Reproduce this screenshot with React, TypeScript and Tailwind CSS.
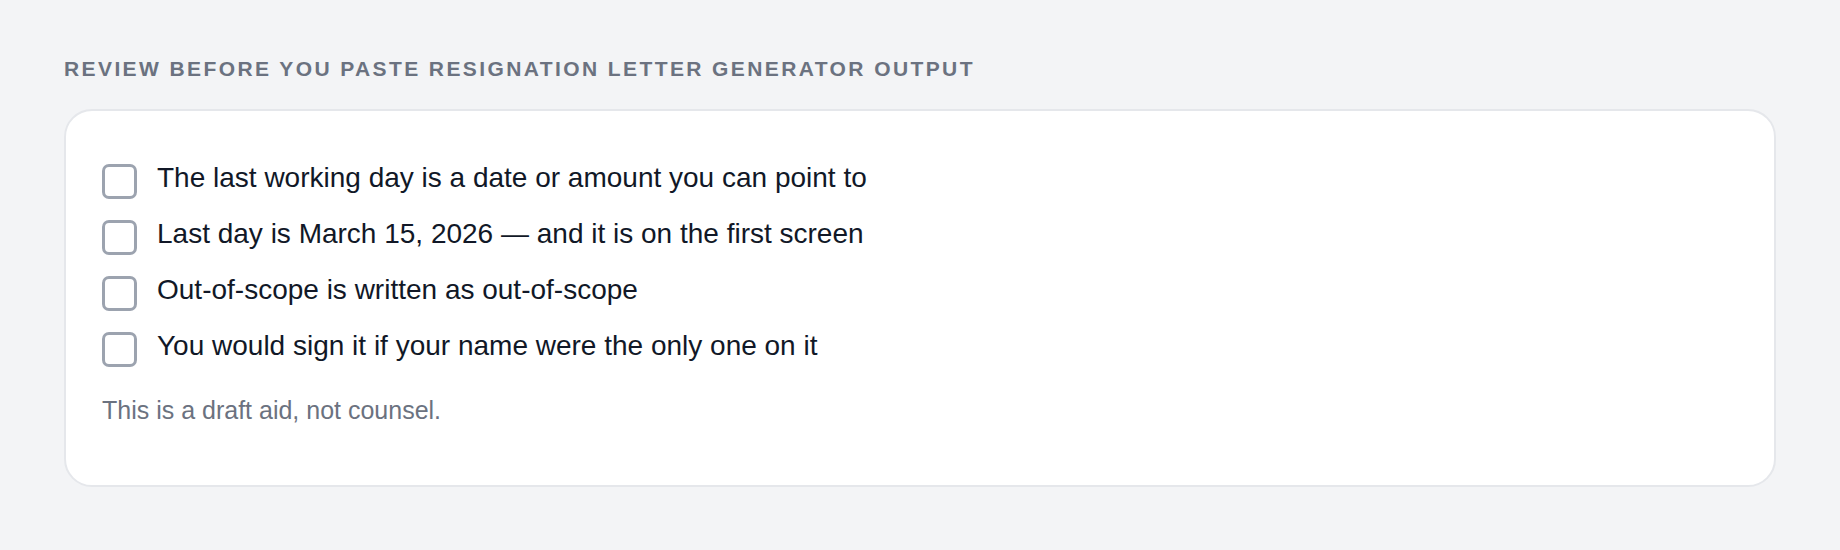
import React from 'react';

const items = [
  'The last working day is a date or amount you can point to',
  'Last day is March 15, 2026 — and it is on the first screen',
  'Out-of-scope is written as out-of-scope',
  'You would sign it if your name were the only one on it',
];

const App: React.FC = () => {
  return (
    <div className="min-h-screen bg-[#f3f4f6] px-[64px] pt-[55px] font-['Liberation_Sans',Arial,sans-serif]">
      <h2 className="text-[21px] leading-[28px] font-bold uppercase tracking-[2.4px] text-[#6b7280]">
        Review before you paste resignation letter generator output
      </h2>

      <div className="mt-[26px] bg-white border-2 border-[#e5e7eb] rounded-[28px] pl-[36px] pr-[36px] pt-[46px] pb-[57px]">
        <ul className="flex flex-col gap-[14px]">
          {items.map((text) => (
            <li key={text} className="flex items-start gap-[20px]">
              <input
                type="checkbox"
                className="appearance-none shrink-0 mt-[7px] w-[35px] h-[35px] border-[3.5px] border-[#9ca3af] rounded-[7px] bg-white"
              />
              <span className="text-[28px] leading-[42px] text-[#111827]">{text}</span>
            </li>
          ))}
        </ul>
        <p className="mt-[26px] text-[25px] leading-[35px] text-[#6b7280]">
          This is a draft aid, not counsel.
        </p>
      </div>
    </div>
  );
};

export default App;
